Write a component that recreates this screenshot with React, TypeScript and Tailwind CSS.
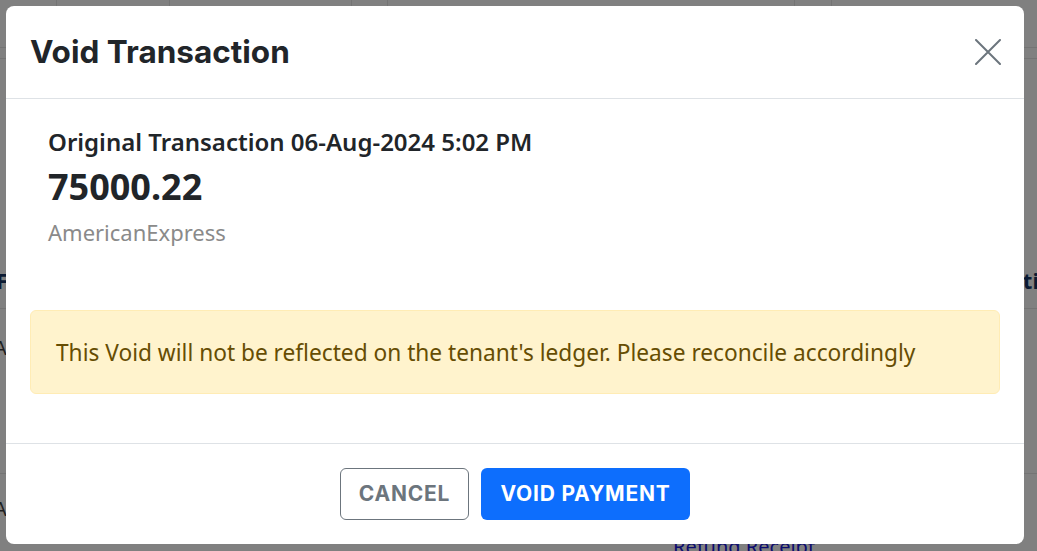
const heading = { fontFamily: "Inter, 'Noto Sans', sans-serif" };
const body = { fontFamily: "'Noto Sans', 'Open Sans', sans-serif" };

function Backdrop() {
  // the page sitting behind the dimmed overlay
  return (
    <div className="absolute inset-0 bg-[#808080] overflow-hidden" style={body}>
      <div className="flex h-[48px] border-b border-[#747474]">
        <div className="w-[57px] border-r border-[#747474]" />
        <div className="w-[113px] border-r border-[#747474]" />
        <div className="w-[182px] border-r border-[#747474]" />
        <div className="w-[36px] border-r border-[#747474]" />
        <div className="w-[407px] border-r border-[#747474]" />
        <div className="w-[37px] border-r border-[#747474]" />
      </div>
      <div className="h-[11px] border-b border-[#747474]" />
      <div className="mt-[210px] flex justify-between text-[22px] font-bold text-[#0b1a33] leading-none">
        <span className="-ml-[4px]">F</span>
        <span className="-mr-[2px]">ti</span>
      </div>
      <div className="mt-[17px] border-b border-[#747474]" />
      <div className="mt-[24px] text-[20px] text-[#1f1f1f] -ml-[6px]">A</div>
      <div className="mt-[110px] border-b border-[#747474]" />
      <div className="mt-[20px] text-[20px] text-[#1f1f1f] -ml-[6px]">A</div>
      <div className="absolute left-[673px] top-[532px] text-[20px] text-[#0c0c6e]">Refund Receipt</div>
    </div>
  );
}

export default function App() {
  return (
    <div className="relative w-[1037px] h-[551px] overflow-hidden">
      <Backdrop />
      <div className="relative pt-[6px] px-[6px]">
        <div className="w-[1018px] h-[538px] bg-white rounded-[8px] flex flex-col">
          <div className="h-[93px] flex items-center justify-between px-[24px] border-b border-[#dee2e6]">
            <h1 className="text-[31.5px] font-bold text-[#212529] leading-none" style={heading}>
              Void Transaction
            </h1>
            <svg width="26" height="26" viewBox="0 0 26 26" className="text-[#6c757d] mr-[-1px]">
              <path d="M1 1 L25 25 M25 1 L1 25" stroke="currentColor" strokeWidth="2" strokeLinecap="round" />
            </svg>
          </div>

          <div className="flex-1 px-[24px] pt-[28px]" style={body}>
            <div className="px-[18px]">
              <p className="text-[24px] font-semibold text-[#212529] leading-[30px]">
                Original Transaction 06-Aug-2024 5:02 PM
              </p>
              <p className="mt-[8px] text-[36px] font-bold text-[#212529] leading-[44px]">75000.22</p>
              <p className="mt-[8px] text-[22px] text-[#8a8a8a] leading-[30px]">AmericanExpress</p>
            </div>
            <div className="mt-[63px] h-[84px] flex items-center px-[25px] pt-[3px] bg-[#fff3cd] border border-[#ffecb5] rounded-[6px] text-[22.7px] text-[#664d03]">
              This Void will not be reflected on the tenant's ledger. Please reconcile accordingly
            </div>
          </div>

          <div className="h-[101px] border-t border-[#dee2e6] flex items-center justify-center gap-[12px]" style={heading}>
            <button className="w-[129px] h-[52px] border border-[#6c757d] rounded-[6px] text-[21px] font-bold tracking-[0.8px] text-[#6c757d]">
              CANCEL
            </button>
            <button className="w-[209px] h-[52px] bg-[#0d6efd] rounded-[6px] text-[21px] font-bold tracking-[0.8px] text-white">
              VOID PAYMENT
            </button>
          </div>
        </div>
      </div>
    </div>
  );
}
